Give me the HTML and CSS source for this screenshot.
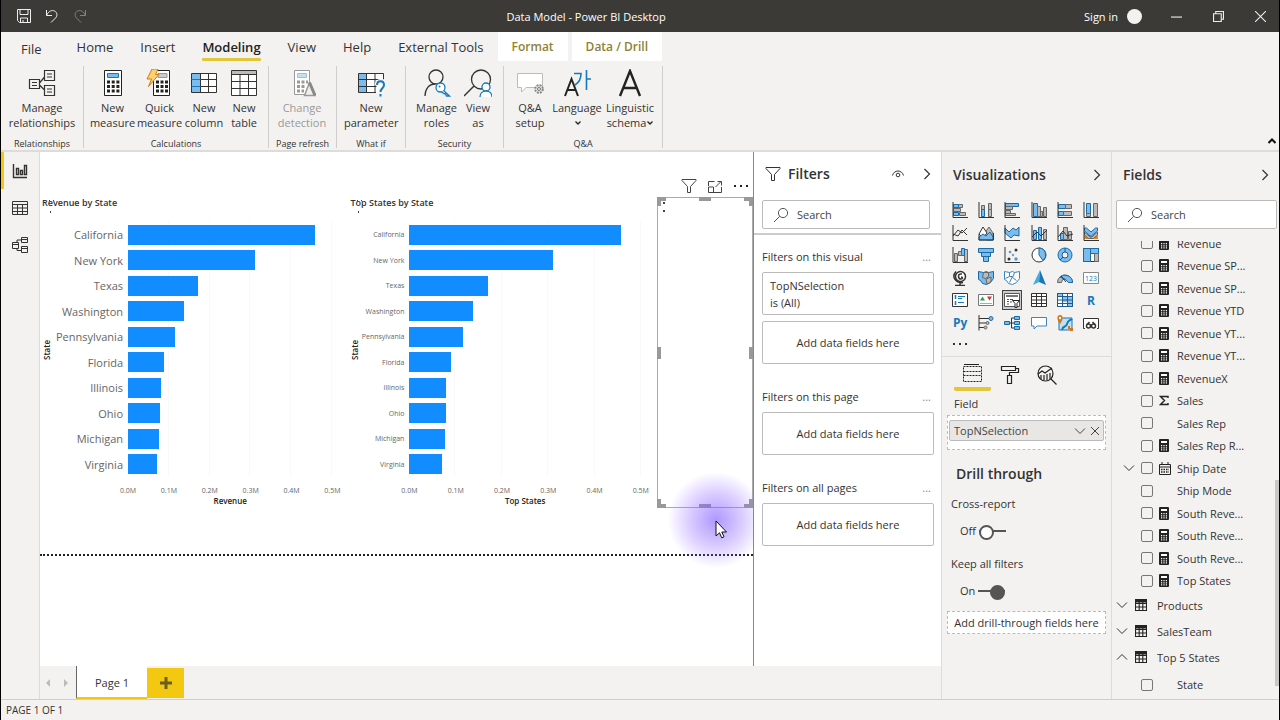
FILE: index.html
```html
<!DOCTYPE html>
<html lang="en">
<head>
    <meta charset="UTF-8">
    <meta name="viewport" content="width=device-width, initial-scale=1.0">
    <title>Data Model - Power BI Desktop</title>
    <link rel="stylesheet" href="styles.css">
</head>
<body>
    <!-- Shared icons -->
    <svg class="defs" aria-hidden="true">
        <symbol id="calc" viewBox="0 0 10 13"><rect width="10" height="13" rx="1" fill="#222"/><path d="M2 2h6v2H2z" fill="#fff"/><path d="M2 6.700h6M2 8.800h6M2 10.900h6" stroke="#fff" stroke-width="1.200" stroke-dasharray="1.200 1.200"/></symbol>
        <symbol id="chev-down" viewBox="0 0 12 12"><path d="M1 3.500l5 5 5-5" fill="none" stroke="currentColor"/></symbol>
        <symbol id="chev-up" viewBox="0 0 12 12"><path d="M1 8.500l5-5 5 5" fill="none" stroke="currentColor"/></symbol>
        <symbol id="chev-right" viewBox="0 0 12 12"><path d="M3.500 1l5 5-5 5" fill="none" stroke="currentColor" stroke-width="1.200"/></symbol>
        <symbol id="search" viewBox="0 0 16 16"><circle cx="10" cy="6" r="4.600" fill="none" stroke="currentColor"/><path d="M6.700 9.300L1 15" stroke="currentColor"/></symbol>
        <symbol id="funnel" viewBox="0 0 16 16"><path d="M1 1.500h14v1L9.500 8.500v6h-3v-6L1 2.500z" fill="none" stroke="currentColor"/></symbol>
        <symbol id="table" viewBox="0 0 12 12"><path d="M.5.5h11v11H.5zM.5 4.500h11M.5 8h11M4.200 3v8.500M7.800 3v8.500" fill="none" stroke="#222" stroke-width="1.100"/><path d="M0 0h12v3.500H0z" fill="#222"/></symbol>
    </svg>

    <header class="titlebar">
        <div class="quick">
            <button aria-label="Save"><svg viewBox="0 0 16 16"><path d="M1.500 1.500h13v13h-11l-2-2zM4 1.500v5h8v-5M4.500 14.500v-4.500h7v4.500M7 12v2.500"/></svg></button>
            <button aria-label="Undo"><svg viewBox="0 0 16 16"><path d="M2.500 2v5.500h5.500M2.500 7.500C4.500 3 8 1.800 10.500 3c3 1.400 3 5 1 7L7 14.500"/></svg></button>
            <button aria-label="Redo" class="dim"><svg viewBox="0 0 16 16"><path d="M13.500 2v5.500h-5.500M13.500 7.500C11.500 3 8 1.800 5.500 3c-3 1.400-3 5-1 7L9 14.500"/></svg></button>
        </div>
        <div class="app-title">Data Model - Power BI Desktop</div>
        <div class="window">
            <a href="#">Sign in</a>
            <span class="avatar"></span>
            <button aria-label="Minimize"><svg viewBox="0 0 10 10"><path d="M0 5.500h10"/></svg></button>
            <button aria-label="Restore"><svg viewBox="0 0 10 10"><path d="M.5 2.500h7v7h-7zM2.500 2.500v-2h7v7h-2"/></svg></button>
            <button aria-label="Close"><svg viewBox="0 0 10 10"><path d="M0 0l10 10M10 0L0 10"/></svg></button>
        </div>
    </header>

    <nav class="tabs">
        <a href="#" class="file">File</a>
        <a href="#">Home</a>
        <a href="#">Insert</a>
        <a href="#" class="active">Modeling</a>
        <a href="#">View</a>
        <a href="#">Help</a>
        <a href="#">External Tools</a>
        <a href="#" class="context">Format</a>
        <a href="#" class="context">Data / Drill</a>
    </nav>

    <section class="ribbon">
        <div class="group">
            <div class="tools">
                <button class="w68"><svg viewBox="0 0 28 28"><path d="M1.500 10.500h10v9h-10zM16.500 1.500h10v10h-10zM16.500 16.500h10v10h-10zM4 13.500h5M4 16.500h5M19 5h5M19 8h5M19 20h5M19 23h5M11.500 14l5-6M11.500 16l5 5" fill="none" stroke="#333" stroke-width="1.200"/></svg>Manage<br>relationships</button>
            </div>
            <h6>Relationships</h6>
        </div>
        <div class="group wide">
            <div class="tools">
                <button class="w47"><svg viewBox="0 0 28 28"><path d="M5.500 1.500h17v25h-17z" fill="#fff" stroke="#222"/><path d="M8.500 4.500h11v4h-11z" fill="#7cbcec" stroke="#1779ba"/><path d="M8 13h12.500M8 17.500h12.500M8 22h12.500" stroke="#222" stroke-width="3" stroke-dasharray="3 1.700"/></svg>New<br>measure</button>
                <button class="w47"><svg viewBox="0 0 28 28"><path d="M7.500 1.500h16v25h-16z" fill="#fff" stroke="#222"/><path d="M12 4.500h9v4h-9z" fill="#ccc" stroke="#999"/><path d="M10 13h12M10 17.500h12M10 22h12" stroke="#222" stroke-width="3" stroke-dasharray="3 1.500"/><path d="M6 0h6L9.500 5.500h3.500L2.500 17.500 5.500 10H1z" fill="#fbd172" stroke="#d47a1c"/></svg>Quick<br>measure</button>
                <button class="w42"><svg viewBox="0 0 28 28"><path d="M1.500 4.500h25v19h-25z" fill="#fff"/><path d="M1.500 4.500h9v19h-9z" fill="#7cbcec"/><path d="M1.500 4.500h25v19h-25zM1.500 10.500h25M1.500 17.500h25M10.500 4.500v19M18.500 4.500v19" fill="none" stroke="#333"/><path d="M1.500 10.500h9M1.500 17.500h9" stroke="#1779ba"/></svg>New<br>column</button>
                <button class="w38"><svg viewBox="0 0 28 28"><path d="M1.500 1.500h25v25h-25z" fill="#fff"/><path d="M1.500 1.500h25v4h-25z" fill="#bbb"/><path d="M1.500 1.500h25v25h-25zM1.500 5.500h25M1.500 12.500h25M1.500 19.500h25M10 5.500v21M18.500 5.500v21" fill="none" stroke="#333"/></svg>New<br>table</button>
            </div>
            <h6>Calculations</h6>
        </div>
        <div class="group">
            <div class="tools">
                <button class="w52" disabled><svg viewBox="0 0 28 28"><path d="M6.500 1.500h15v24h-15z" fill="#fff" stroke="#999"/><path d="M9.500 4.500h9v4h-9z" fill="#c5dff2" stroke="#9bc3de"/><path d="M9 13h11M9 17.500h8M9 22h7" stroke="#999" stroke-width="3" stroke-dasharray="3 1.500"/><path d="M16.500 26.500l5-13 5.500 13z" fill="#eee" stroke="#999" stroke-width="1.500"/><path d="M21.500 13.500l5.500 13" stroke="#888" stroke-width="3"/></svg>Change<br>detection</button>
            </div>
            <h6>Page refresh</h6>
        </div>
        <div class="group">
            <div class="tools">
                <button class="w54"><svg viewBox="0 0 28 28"><path d="M1.500 4.500h25v19h-25z" fill="#fff"/><path d="M1.500 4.500h8v19h-8z" fill="#7cbcec"/><path d="M19 23.500H1.500v-19h25v7M1.500 10.500h22M1.500 17.500h18M9.500 4.500v19M18 4.500v19" fill="none" stroke="#333"/><path d="M20 16c0-5 8-5 8 0 0 3.500-4 3-4 7.500" fill="none" stroke="#f3f2f0" stroke-width="5"/><path d="M20 16c0-5 7-5 7 0 0 3.500-3.500 3-3.500 7M23.500 25v2.500" fill="none" stroke="#1779ba" stroke-width="2"/></svg>New<br>parameter</button>
            </div>
            <h6>What if</h6>
        </div>
        <div class="group">
            <div class="tools">
                <button class="w47"><svg viewBox="0 0 28 28"><circle cx="13" cy="8" r="7" fill="none" stroke="#333" stroke-width="1.300"/><path d="M2 27c0-7 4-12 10-12" fill="none" stroke="#333" stroke-width="1.300"/><circle cx="17.500" cy="18.500" r="4.500" fill="#fff" stroke="#1779ba" stroke-width="1.300"/><path d="M20.500 21.500l6 5.500h-3l-1-2-2-.5-2-2" fill="#fff" stroke="#1779ba" stroke-width="1.300"/><circle cx="16.500" cy="17.500" r="1" fill="#1779ba"/></svg>Manage<br>roles</button>
                <button class="w36"><svg viewBox="0 0 28 28"><circle cx="17" cy="10.500" r="9.500" fill="none" stroke="#333" stroke-width="1.300"/><path d="M10 17L0 27" stroke="#333" stroke-width="1.500"/><circle cx="22" cy="18" r="4" fill="#fff" stroke="#1779ba" stroke-width="1.300"/><path d="M16 28c0-8 12-8 12 0" fill="#fff" stroke="#1779ba" stroke-width="1.300"/></svg>View<br>as</button>
            </div>
            <h6>Security</h6>
        </div>
        <div class="group wide">
            <div class="tools">
                <button class="w42"><svg viewBox="0 0 28 28"><path d="M1.500 4.500h25v14H10l-4.500 4.500v-4.500h-4z" fill="#fff" stroke="#bbb"/><circle cx="23" cy="20" r="3.800" fill="#eee" stroke="#888" stroke-width="2" stroke-dasharray="2 1"/><circle cx="23" cy="20" r="1.500" fill="none" stroke="#777"/></svg>Q&amp;A<br>setup</button>
                <button class="w52"><svg viewBox="0 0 28 28"><path d="M2 27L8.500 10l6.500 17M4.500 21h8" fill="none" stroke="#222" stroke-width="2"/><path d="M11 4.500h7c0 6-2 9-6 11.500M23.500 1v20M23.500 10h4.500" fill="none" stroke="#1779ba" stroke-width="1.600"/></svg>Language<br><svg class="caret" viewBox="0 0 6 6"><path d="M.5 1.500L3 4l2.500-2.500" fill="none" stroke="#222" stroke-width="1.300"/></svg></button>
                <button class="w54"><svg viewBox="0 0 28 28"><path d="M4 27L14 2l10 25M7.500 19h13" fill="none" stroke="#222" stroke-width="2.400"/></svg>Linguistic<br>schema<svg class="caret" viewBox="0 0 6 6"><path d="M.5 1.500L3 4l2.500-2.500" fill="none" stroke="#222" stroke-width="1.300"/></svg></button>
            </div>
            <h6>Q&amp;A</h6>
        </div>
        <button class="collapse" aria-label="Collapse ribbon"><svg viewBox="0 0 8 8"><path d="M.5 6L4 2.500 7.500 6" fill="none" stroke="#111" stroke-width="2"/></svg></button>
    </section>

    <main class="workspace">
        <nav class="rail">
            <button class="active" aria-label="Report"><svg viewBox="0 0 16 16"><path d="M1.500 1v13.500H15M4.500 5.500h2v6h-2zM8.500 7.500h2v4h-2zM12.500 2.500h2v9h-2z" stroke-width="1.400"/></svg></button>
            <button aria-label="Data"><svg viewBox="0 0 16 16"><path d="M.5 1.500h15v13H.5zM.5 4.500h15M.5 8h15M.5 11.500h15M5.500 4.500v10M10.500 4.500v10"/></svg></button>
            <button aria-label="Model"><svg viewBox="0 0 16 16"><path d="M.5 5.500h6v6h-6zM.5 7.500h6M9.500 .5h6v5h-6zM9.500 2.500h6M9.500 9.500h6v6h-6zM9.500 11.500h6M5 5.500V3h4.500M5 11.500V13.500h4.500"/></svg></button>
        </nav>

        <section class="canvas">
            <div class="page">
                <article class="chart">
                    <h2>Revenue by State</h2>
                    <i class="drag"></i>
                    <div class="y-title">State</div>
                    <ul class="labels">
                        <li>California</li><li>New York</li><li>Texas</li><li>Washington</li><li>Pennsylvania</li>
                        <li>Florida</li><li>Illinois</li><li>Ohio</li><li>Michigan</li><li>Virginia</li>
                    </ul>
                    <div class="plot">
                        <div style="width: 91.5%"></div>
                        <div style="width: 62%"></div>
                        <div style="width: 34%"></div>
                        <div style="width: 27.5%"></div>
                        <div style="width: 23.2%"></div>
                        <div style="width: 17.8%"></div>
                        <div style="width: 16%"></div>
                        <div style="width: 15.6%"></div>
                        <div style="width: 15.2%"></div>
                        <div style="width: 14%"></div>
                    </div>
                    <div class="ticks"><span>0.0M</span><span>0.1M</span><span>0.2M</span><span>0.3M</span><span>0.4M</span><span>0.5M</span></div>
                    <div class="x-title">Revenue</div>
                </article>

                <article class="chart small">
                    <h2>Top States by State</h2>
                    <i class="drag"></i>
                    <div class="y-title">State</div>
                    <ul class="labels">
                        <li>California</li><li>New York</li><li>Texas</li><li>Washington</li><li>Pennsylvania</li>
                        <li>Florida</li><li>Illinois</li><li>Ohio</li><li>Michigan</li><li>Virginia</li>
                    </ul>
                    <div class="plot">
                        <div style="width: 91.5%"></div>
                        <div style="width: 62%"></div>
                        <div style="width: 34%"></div>
                        <div style="width: 27.5%"></div>
                        <div style="width: 23.2%"></div>
                        <div style="width: 17.8%"></div>
                        <div style="width: 16%"></div>
                        <div style="width: 15.6%"></div>
                        <div style="width: 15.2%"></div>
                        <div style="width: 14%"></div>
                    </div>
                    <div class="ticks"><span>0.0M</span><span>0.1M</span><span>0.2M</span><span>0.3M</span><span>0.4M</span><span>0.5M</span></div>
                    <div class="x-title">Top States</div>
                </article>

                <article class="selected">
                    <div class="visual-tools">
                        <button aria-label="Filters"><svg><use href="#funnel"/></svg></button>
                        <button aria-label="Focus mode"><svg viewBox="0 0 16 16"><path d="M1.500 8V3.500h6M14.500 9v5.500h-13V9h5v5.500M8.500 9L14 3.500M10.500 3.500h4v4" fill="none" stroke="currentColor"/></svg></button>
                        <button aria-label="More options"><svg viewBox="0 0 16 16"><path d="M1 8h2M7 8h2M13 8h2" stroke="#222" stroke-width="2"/></svg></button>
                    </div>
                    <span class="handle tl"></span><span class="handle t"></span><span class="handle tr"></span>
                    <span class="handle l"></span><span class="handle r"></span>
                    <span class="handle bl"></span><span class="handle b"></span><span class="handle br"></span>
                    <i class="dots"></i>
                    <div class="halo"></div>
                    <svg class="cursor" viewBox="0 0 12 19"><path d="M1 1v15l3.500-3.200 2.200 5 2.300-1-2.200-4.800H11.500z" fill="#fff" stroke="#111"/></svg>
                </article>
            </div>
        </section>

        <aside class="filters">
            <header>
                <svg><use href="#funnel"/></svg>
                <h2>Filters</h2>
                <button aria-label="Hide pane"><svg viewBox="0 0 12 12"><path d="M.5 7.500C2 1.500 10 1.500 11.500 7.500" fill="none" stroke="currentColor"/><circle cx="6" cy="7" r="1.800" fill="none" stroke="currentColor"/></svg></button>
                <button aria-label="Collapse filters"><svg><use href="#chev-right"/></svg></button>
            </header>
            <label class="search"><svg><use href="#search"/></svg><input type="text" placeholder="Search" aria-label="Search filters"></label>
            <section>
                <h3>Filters on this visual <button aria-label="More options">...</button></h3>
                <div class="card">TopNSelection<br>is (All)</div>
                <div class="card drop">Add data fields here</div>
            </section>
            <section>
                <h3>Filters on this page <button aria-label="More options">...</button></h3>
                <div class="card drop">Add data fields here</div>
            </section>
            <section>
                <h3>Filters on all pages <button aria-label="More options">...</button></h3>
                <div class="card drop">Add data fields here</div>
            </section>
        </aside>

        <aside class="visuals">
            <header>
                <h2>Visualizations</h2>
                <button aria-label="Collapse visualizations"><svg><use href="#chev-right"/></svg></button>
            </header>
            <div class="gallery">
                <button aria-label="Stacked bar chart"><svg viewBox="0 0 16 16"><path class="g" d="M6.500 2.500h4v3h-4zM7.500 10.500h6v3h-6z"/><path class="b" d="M1.500 2.500h5v3h-5zM1.500 10.500h5v3h-5z"/><path class="g" d="M1.500 6.500h7v3h-7z"/><path class="k" d="M1 0v15.500h15"/></svg></button>
                <button aria-label="Stacked column chart"><svg viewBox="0 0 16 16"><path class="g" d="M3.500 3.500h3v4h-3zM10.500 1.500h3v6h-3z"/><path class="b" d="M3.500 7.500h3v7h-3z"/><path class="g" d="M10.500 7.500h3v7h-3z"/><path class="k" d="M1 0v15.500h15"/></svg></button>
                <button aria-label="Clustered bar chart"><svg viewBox="0 0 16 16"><path class="b" d="M1.500 1.500h13v3h-13z"/><path class="g" d="M1.500 4.500h7v3h-7zM1.500 8.500h5v3h-5zM1.500 11.500h10v2h-10z"/><path class="k" d="M1 0v15.500h15"/></svg></button>
                <button aria-label="Clustered column chart"><svg viewBox="0 0 16 16"><path class="b" d="M2.500 1.500h4v13h-4z"/><path class="g" d="M6.500 4.500h3v10h-3zM9.500 9.500h2v5h-2zM12.500 5.500h3v9h-3z"/><path class="k" d="M1 0v15.500h15"/></svg></button>
                <button aria-label="100% stacked bar chart"><svg viewBox="0 0 16 16"><path class="b" d="M1.500 2.500h7v4h-7zM1.500 9.500h5v4h-5z"/><path class="g" d="M8.500 2.500h6v4h-6zM6.500 9.500h8v4h-8z"/><path class="k" d="M1 0v15.500h15"/></svg></button>
                <button aria-label="100% stacked column chart"><svg viewBox="0 0 16 16"><path class="b" d="M3.500 1.500h4v10h-4z"/><path class="g" d="M3.500 11.500h4v3h-4zM10.500 1.500h4v13h-4z"/><path class="k" d="M1 0v15.500h15"/></svg></button>

                <button aria-label="Line chart"><svg viewBox="0 0 16 16"><path class="k" d="M1 0v15.500h15M1 11l5-6 4 3 5-5M1 9l5 2 4-6 5 5"/></svg></button>
                <button aria-label="Area chart"><svg viewBox="0 0 16 16"><path class="g" d="M6 9l5-7 4 6v7H9z"/><path class="w" d="M1 9l4-7 4 6-4 5z"/><path class="b" d="M1 15v-3l4-3 3 2 4-4 3 5v3z"/><path class="k" d="M1 9v6h14.500V8"/></svg></button>
                <button aria-label="Stacked area chart"><svg viewBox="0 0 16 16"><path class="b" d="M1 3l4 4 4-4 3 2 3-3v9l-5-1-3 3-6-5z"/><path class="k" d="M1 0v15.500h15"/></svg></button>
                <button aria-label="Line and stacked column chart"><svg viewBox="0 0 16 16"><path class="b" d="M2.500 5.500h3v9h-3zM7.500 2.500h3v12h-3z"/><path class="g" d="M12.500 4.500h3v10h-3z"/><path class="k" d="M1 0v15.500h15M1 12l5-5 4 4 6-6"/></svg></button>
                <button aria-label="Line and clustered column chart"><svg viewBox="0 0 16 16"><path class="b" d="M3.500 8.500h3v6h-3z"/><path class="g" d="M6.500 2.500h4v12h-4zM11.500 6.500h3v8h-3z"/><path class="k" d="M1 0v15.500h15M1 12l5-6 4 5 6-2"/></svg></button>
                <button aria-label="Ribbon chart"><svg viewBox="0 0 16 16"><path fill="#d8892b" d="M1 11l4-2 5 3 5-2v4H1z"/><path class="b" d="M1.500 3h2l4.500 4 4.500-4h2v3l-6 5H7L1.500 6z"/><path class="g" d="M1.500 7l5.500 5h2l5.500-5v3l-4 3.500h-5L1.500 10z"/><path class="k" d="M1 0v15.500h15"/></svg></button>

                <button aria-label="Waterfall chart"><svg viewBox="0 0 16 16"><path class="g" d="M2.500 6.500h3v8h-3zM12.500 2.500h3v12h-3z"/><path class="b" d="M9.500 1.500h3v7h-3z"/><path class="g" d="M6.500 4.500h3v4h-3z"/><path class="k" d="M1 0v15.500h15"/></svg></button>
                <button aria-label="Funnel chart"><svg viewBox="0 0 16 16"><path class="b" d="M.5 1.500h15v4H.5zM3.500 5.500h9v4h-9zM5.500 9.500h5v5h-5z"/></svg></button>
                <button aria-label="Scatter chart"><svg viewBox="0 0 16 16"><path class="k" d="M1 0v15.500h15"/><circle cx="5" cy="12" r="1.500" fill="#333"/><circle cx="12" cy="3" r="1.500" fill="#333"/><circle cx="6" cy="5" r="1.300" fill="#4e9bd3"/><circle cx="12" cy="12" r="1.700" fill="#4e9bd3"/><circle cx="9" cy="8" r="1.200" fill="#999"/></svg></button>
                <button aria-label="Pie chart"><svg viewBox="0 0 16 16"><circle class="w" cx="8" cy="8" r="7"/><path class="b" d="M8 1a7 7 0 0 1 4 12.500L8 8z"/></svg></button>
                <button aria-label="Donut chart"><svg viewBox="0 0 16 16"><circle class="b" cx="8" cy="8" r="7"/><circle cx="8" cy="8" r="3" fill="#f3f2f0" stroke="#1a5c92"/><path d="M8 1v4M3 13l3-3" stroke="#1a5c92"/></svg></button>
                <button aria-label="Treemap"><svg viewBox="0 0 16 16"><path class="w" d="M.5 1.500h15v13H.5z"/><path class="b" d="M.5 1.500h7v13h-7z"/><path class="b" d="M7.500 1.500h8v5h-8z"/><path class="g" d="M11.500 6.500h4v8h-4z"/></svg></button>

                <button aria-label="Map"><svg viewBox="0 0 16 16"><circle class="w thick" cx="8.500" cy="6.500" r="5"/><path class="k thick" d="M4 1.500C-1 7 4 13.500 11 12.500M8 13v2.500M3 15.500h10M10 4c-5-1-4 5-1 5 2 0 2-2 0-2"/></svg></button>
                <button aria-label="Filled map"><svg viewBox="0 0 16 16"><path class="b" d="M.5 1.500l5 1 3-1 2 1 5-1v7l-3 4-4 2-4-1-2-3-2-1z"/><path class="g" d="M5.500 2.500h5v4l-3 2-3-1zM8 9l5-2v5l-4 2z"/></svg></button>
                <button aria-label="Shape map"><svg viewBox="0 0 16 16"><path class="w blue" d="M.5 1.500l5 1 3-1 2 1 5-1v7l-3 4-4 2-4-1-2-3-2-1zM5.500 2.500v4l-4 2M10.500 2.500l-2 5 4 3M5.500 6.500h3l-3 6"/></svg></button>
                <button aria-label="Azure map"><svg viewBox="0 0 16 16"><path d="M9 0L2 15l6-3z" fill="#49a9dd"/><path d="M9 0l6 15-7-3z" fill="#1779ba"/></svg></button>
                <button aria-label="Gauge"><svg viewBox="0 0 16 16"><path class="g" d="M.5 12.500a7.500 7.500 0 0 1 15 0h-4a3.500 3.500 0 0 0-7 0z"/><path class="b" d="M3 7a7.500 7.500 0 0 1 12.500 5.500h-4L8 9z"/><path class="k" d="M4 6l5 6"/></svg></button>
                <button aria-label="Card"><svg viewBox="0 0 16 16"><path d="M.5 2.500h15v11H.5z" fill="#fff" stroke="#888"/><text x="2" y="11" font-size="7" fill="#1779ba">123</text></svg></button>

                <button aria-label="Multi-row card"><svg viewBox="0 0 16 16"><path class="w" d="M.5 1.500h15v13H.5z"/><path d="M3.500 3v4M3.500 9v4" stroke="#1779ba" stroke-width="1.500"/><path d="M6 4.500h7M6 6.500h4M6 10.500h6" stroke="#1779ba"/></svg></button>
                <button aria-label="KPI"><svg viewBox="0 0 16 16"><path d="M.5 2.500h15v11H.5z" fill="#fff" stroke="#777"/><path d="M2 8.500l2.500-4 2.500 4z" fill="#2f9e54"/><path d="M9 4.500h5l-2.500 4z" fill="#d13438"/><path d="M2 11.500h12" stroke="#aaa"/></svg></button>
                <button aria-label="Slicer" class="picked"><svg viewBox="0 0 16 16"><path d="M.5 1.500h15v13H.5z" fill="#fff" stroke="#555"/><path d="M2 4h12" stroke="#777" stroke-width="2"/><path d="M3 7.500h2M3 9.500h2M3 12h2M6 7.500h3M6 10h2" stroke="#555"/><path d="M8.500 8.500h7l-2.500 3v4h-2v-4z" fill="#fff" stroke="#222"/></svg></button>
                <button aria-label="Table"><svg viewBox="0 0 16 16"><path class="w" d="M.5 1.500h15v13H.5zM.5 4.500h15M.5 8h15M.5 11.500h15M5.500 1.500v13M10.500 1.500v13"/></svg></button>
                <button aria-label="Matrix"><svg viewBox="0 0 16 16"><path class="w" d="M.5 1.500h15v13H.5z"/><path fill="#8cc4ef" d="M6 5h9v9H10v-4H6zM1 2h4v2H1z"/><path fill="none" stroke="#1a5c92" d="M.5 1.500h15v13H.5zM.5 4.500h15M.5 8h15M.5 11.500h15M5.500 1.500v13M10.500 1.500v13"/></svg></button>
                <button aria-label="R script visual" class="letters">R</button>

                <button aria-label="Python visual" class="letters">Py</button>
                <button aria-label="Key influencers"><svg viewBox="0 0 16 16"><path class="k" d="M1 0v15.500M1 3.500h10M1 8h7M1 12.500h5"/><circle class="b" cx="13" cy="3.500" r="2"/><circle class="g" cx="9.500" cy="8" r="1.500"/><circle class="g" cx="7.500" cy="12.500" r="1.500"/></svg></button>
                <button aria-label="Decomposition tree"><svg viewBox="0 0 16 16"><path class="k" d="M5 8h5M7.500 3v10M7.500 3H10M7.500 13H10"/><path class="b" d="M.5 6.500h5v3h-5zM10.500 1.500h5v3h-5zM10.500 6.500h5v3h-5zM10.500 11.500h5v3h-5z"/></svg></button>
                <button aria-label="Q&amp;A"><svg viewBox="0 0 16 16"><path d="M.5 2.500h15v8.500H6l-3 3v-3H.5z" fill="#fff" stroke="#3c87be"/></svg></button>
                <button aria-label="ArcGIS map"><svg viewBox="0 0 16 16"><path d="M2 3h13v12H2z" fill="#bfe0f5" stroke="#1779ba"/><path d="M5 15c1-5 4-2 5-6s2-3 5-5" fill="none" stroke="#1779ba" stroke-width="2"/><path d="M3 9C-1 4 0 0 3 0s4 4 0 9z" fill="#d4751b"/><circle cx="3" cy="3" r="1.200" fill="#fff"/><path d="M11 11h2v2h3v3h-3v-2h-2z" fill="#d4751b"/></svg></button>
                <button aria-label="Paginated report"><svg viewBox="0 0 16 16"><path class="w" d="M2 13.500H.5v-10h15v10H14"/><circle class="k thick" cx="5.500" cy="11" r="2"/><circle class="k thick" cx="10.500" cy="11" r="2"/><path class="k thick" d="M4 9.500L6.500 7M12 9.500L9.500 7"/></svg></button>
                <button aria-label="Get more visuals"><svg viewBox="0 0 16 16"><path d="M1 7h2M7 7h2M13 7h2" stroke="#333" stroke-width="2"/></svg></button>
            </div>

            <div class="modes">
                <button class="active" aria-label="Fields"><svg viewBox="0 0 20 20"><path d="M1 1.500h15" stroke="#222"/><path d="M.5 3.500h18v15H.5zM.5 8.500h18M.5 12.500h18" fill="none" stroke="#222" stroke-dasharray="2 1"/></svg></button>
                <button aria-label="Format"><svg viewBox="0 0 20 20"><path d="M1.500 1.500h14v4h-14zM15.500 3.500h3v4h-9v3M7.500 10.500h4v8h-4z" fill="none" stroke="#222" stroke-width="1.200"/></svg></button>
                <button aria-label="Analytics"><svg viewBox="0 0 20 20"><circle cx="8.500" cy="8.500" r="7.500" fill="none" stroke="#222" stroke-width="1.200"/><path d="M14 14l5.500 5.500M1 9l4-3 3 2 7-5M4 14v-4M7 15v-5M10 15v-6M13 14V8" fill="none" stroke="#222" stroke-width="1.200"/></svg></button>
            </div>

            <div class="wells">
                <h4>Field</h4>
                <div class="well">
                    <div class="pill"><span>TopNSelection</span><button aria-label="Field menu"><svg><use href="#chev-down"/></svg></button><button aria-label="Remove field"><svg viewBox="0 0 12 12"><path d="M2 2l8 8M10 2l-8 8" stroke="currentColor"/></svg></button></div>
                </div>
                <h3>Drill through</h3>
                <h4>Cross-report</h4>
                <label class="toggle">Off <input type="checkbox"></label>
                <h4>Keep all filters</h4>
                <label class="toggle">On <input type="checkbox" checked></label>
                <div class="well hint">Add drill-through fields here</div>
            </div>
        </aside>

        <aside class="fields">
            <header>
                <h2>Fields</h2>
                <button aria-label="Collapse fields"><svg><use href="#chev-right"/></svg></button>
            </header>
            <label class="search"><svg><use href="#search"/></svg><input type="text" placeholder="Search" aria-label="Search fields"></label>
            <div class="tree">
                <div class="items">
                    <label><i></i><input type="checkbox"><svg><use href="#calc"/></svg>Revenue</label>
                    <label><i></i><input type="checkbox"><svg><use href="#calc"/></svg>Revenue SP...</label>
                    <label><i></i><input type="checkbox"><svg><use href="#calc"/></svg>Revenue SP...</label>
                    <label><i></i><input type="checkbox"><svg><use href="#calc"/></svg>Revenue YTD</label>
                    <label><i></i><input type="checkbox"><svg><use href="#calc"/></svg>Revenue YT...</label>
                    <label><i></i><input type="checkbox"><svg><use href="#calc"/></svg>Revenue YT...</label>
                    <label><i></i><input type="checkbox"><svg><use href="#calc"/></svg>RevenueX</label>
                    <label><i></i><input type="checkbox"><svg viewBox="0 0 10 13"><path d="M9 4V2.500H1.500L5.500 6.500l-4 4H9V9" fill="none" stroke="#222" stroke-width="1.400"/></svg>Sales</label>
                    <label><i></i><input type="checkbox"><b></b>Sales Rep</label>
                    <label><i></i><input type="checkbox"><svg><use href="#calc"/></svg>Sales Rep R...</label>
                    <label><svg class="chev"><use href="#chev-down"/></svg><input type="checkbox"><svg class="date" viewBox="0 0 12 13"><path d="M.5 2.500h11v10H.5zM.5 5h11M3 0v3M9 0v3" fill="none" stroke="#222"/><path d="M2 7.500h8M2 10h8" stroke="#222" stroke-width="1.500" stroke-dasharray="1.500 1"/></svg>Ship Date</label>
                    <label><i></i><input type="checkbox"><b></b>Ship Mode</label>
                    <label><i></i><input type="checkbox"><svg><use href="#calc"/></svg>South Reve...</label>
                    <label><i></i><input type="checkbox"><svg><use href="#calc"/></svg>South Reve...</label>
                    <label><i></i><input type="checkbox"><svg><use href="#calc"/></svg>South Reve...</label>
                    <label><i></i><input type="checkbox"><svg><use href="#calc"/></svg>Top States</label>
                </div>
                <button class="table-row"><svg><use href="#chev-down"/></svg><svg><use href="#table"/></svg>Products</button>
                <button class="table-row"><svg><use href="#chev-down"/></svg><svg><use href="#table"/></svg>SalesTeam</button>
                <button class="table-row"><svg><use href="#chev-up"/></svg><svg><use href="#table"/></svg>Top 5 States</button>
                <div class="items single">
                    <label><i></i><input type="checkbox"><b></b>State</label>
                </div>
                <span class="thumb"></span>
            </div>
        </aside>

        <nav class="sheets">
            <button class="arrow" aria-label="Previous page"><svg viewBox="0 0 6 8"><path d="M5 0v8L1 4z"/></svg></button>
            <button class="arrow" aria-label="Next page"><svg viewBox="0 0 6 8"><path d="M1 0v8l4-4z"/></svg></button>
            <button class="sheet">Page 1</button>
            <button class="add" aria-label="New page"><svg viewBox="0 0 12 12"><path d="M6 0v12M0 6h12" stroke="#6b5f1e" stroke-width="3"/></svg></button>
        </nav>
    </main>

    <footer>PAGE 1 OF 1</footer>
</body>
</html>
```
FILE: styles.css
```css
* {
    box-sizing: border-box;
}
body {
    margin: 0;
    height: 100vh;
    display: flex;
    flex-direction: column;
    overflow: hidden;
    background: #f3f2f0;
    border-left: 1px solid #000;
    border-right: 1px solid #000;
    color: #333;
    font-family: "Open Sans", "Noto Sans", sans-serif;
    font-size: 11px;
    line-height: 15px;
}
h2, h3, h4, h6, ul {
    margin: 0;
    padding: 0;
    font-size: 11px;
    font-weight: normal;
}
ul {
    list-style: none;
}
a {
    color: inherit;
    text-decoration: none;
}
button {
    margin: 0;
    padding: 0;
    border: none;
    background: none;
    color: inherit;
    font: inherit;
}
svg {
    display: block;
    flex: none;
}
.defs {
    position: absolute;
    width: 0;
    height: 0;
}

/* Title bar */
.titlebar {
    display: flex;
    align-items: center;
    height: 32px;
    flex: none;
    background: #3b3a36;
    color: #fff;
}
.titlebar svg {
    fill: none;
    stroke: #eee;
}
.quick {
    display: flex;
    gap: 12px;
    padding-left: 15px;
}
.quick svg {
    width: 16px;
    height: 16px;
}
.quick .dim {
    opacity: 0.4;
}
.app-title {
    flex: 1;
    text-align: center;
}
.window {
    display: flex;
    align-items: center;
    padding-right: 13px;
}
.avatar {
    width: 15px;
    height: 15px;
    margin: 0 29px 0 9px;
    border-radius: 50%;
    background: #f3f2f0;
}
.window button {
    margin-left: 31px;
}
.window .avatar + button {
    margin-left: 0;
}
.window svg {
    width: 11px;
    height: 11px;
}

/* Ribbon tabs */
.tabs {
    display: flex;
    flex: none;
    height: 30px;
    padding-left: 6px;
    font-size: 13px;
    line-height: 30px;
}
.tabs a {
    height: 29px;
    padding: 0 14px 0 13px;
}
.tabs .file {
    margin-right: 8px;
    padding: 2px 14px 0;
}
.tabs .active {
    position: relative;
    font-weight: 600;
    color: #222;
}
.tabs .active::after {
    content: '';
    position: absolute;
    left: 13px;
    right: 14px;
    bottom: 0;
    height: 3px;
    border-radius: 1px;
    background: #e3c63a;
}
.tabs .context {
    margin-right: 4px;
    padding: 0 14px;
    background: #fff;
    color: #8f8136;
    font-size: 12px;
    font-weight: 600;
}

/* Ribbon */
.ribbon {
    display: flex;
    flex: none;
    height: 90px;
    padding: 4px 0 2px;
    border-bottom: 2px solid #dddcda;
}
.group {
    display: flex;
    flex-direction: column;
    justify-content: space-between;
    padding: 0 7px;
    border-right: 1px solid #cfcecc;
}
.group.wide {
    padding: 0 5px;
}
.tools {
    display: flex;
}
.tools button {
    padding-top: 3px;
    white-space: nowrap;
    text-align: center;
}
.tools button:disabled {
    color: #999;
}
.tools svg {
    width: 28px;
    height: 28px;
    margin: 0 auto 3px;
}
.tools .caret {
    display: inline-block;
    width: 6px;
    height: 6px;
    margin: 0 0 1px 1px;
}
.w36 { width: 36px; }
.w38 { width: 38px; }
.w42 { width: 42px; }
.w47 { width: 47px; }
.w52 { width: 52px; }
.w54 { width: 54px; }
.w68 { width: 68px; }
.group h6 {
    font-size: 9px;
    line-height: 8px;
    text-align: center;
    white-space: nowrap;
}
.collapse {
    align-self: flex-end;
    margin-left: auto;
    padding: 0 3px 3px 0;
}
.collapse svg {
    width: 8px;
    height: 8px;
}

/* Workspace */
.workspace {
    flex: 1;
    min-height: 0;
    display: grid;
    grid-template-columns: 39px 1fr 189px 170px 167px;
    grid-template-rows: 1fr 33px;
    border-bottom: 1px solid #cfcecc;
}
.rail {
    grid-row: 1 / 3;
    border-right: 1px solid #dddcda;
}
.rail button {
    display: flex;
    align-items: center;
    width: 100%;
    height: 37px;
    padding-left: 11px;
}
.rail .active {
    padding-left: 8px;
    border-left: 3px solid #f2c811;
}
.rail svg {
    width: 16px;
    height: 16px;
    fill: none;
    stroke: #333;
}

/* Report page */
.canvas {
    overflow: hidden;
    background: #fff;
}
.page {
    display: grid;
    grid-template-columns: 308fr 308fr 96fr;
    height: 404px;
    padding-top: 45px;
    border-bottom: 2px dotted #222;
}
.chart {
    position: relative;
    display: grid;
    grid-template-columns: 14px 69px 1fr;
    grid-template-rows: 25px 255px 9px 10px 10px;
    padding-right: 16px;
}
.chart.small {
    grid-template-columns: 14px 42px 1fr;
}
.chart h2 {
    grid-column: 1 / 4;
    padding-left: 2px;
    font-size: 9px;
    line-height: 12px;
    font-weight: 600;
    color: #333;
}
.drag {
    position: absolute;
    left: 10px;
    top: 14px;
    width: 1px;
    height: 1px;
    background: #444;
    box-shadow: 0 1px #444, -1px -11px #444, 3px -11px #444;
}
.y-title {
    grid-area: 2 / 1;
    justify-self: center;
    align-self: center;
    writing-mode: vertical-rl;
    transform: rotate(180deg);
    font-size: 8px;
    line-height: 10px;
    font-weight: 600;
    color: #222;
}
.labels, .plot {
    display: grid;
    grid-template-rows: repeat(10, 1fr);
    align-items: center;
}
.labels {
    grid-area: 2 / 2;
    justify-content: end;
    text-align: right;
    color: #666;
    white-space: nowrap;
}
.small .labels {
    font-size: 7px;
}
.plot {
    grid-area: 2 / 3;
    margin-left: 5px;
    background: repeating-linear-gradient(to right, #fff 0, #fff calc(20% - 1px), #f9f9f9 calc(20% - 1px), #f9f9f9 20%);
}
.plot div {
    height: 20px;
    background: #118dff;
}
.ticks {
    grid-area: 4 / 3;
    display: flex;
    justify-content: space-between;
    margin: 0 -12px 0 -7px;
    font-size: 7px;
    line-height: 10px;
    color: #666;
}
.ticks span {
    width: 24px;
    text-align: center;
}
.x-title {
    grid-area: 5 / 3;
    padding-left: 5px;
    text-align: center;
    font-size: 8px;
    line-height: 10px;
    font-weight: 600;
    color: #222;
}
.selected {
    position: relative;
    height: 311px;
    border: 1px solid #aaa;
    color: #444;
}
.visual-tools {
    position: absolute;
    right: 3px;
    top: -20px;
    display: flex;
    gap: 10px;
}
.visual-tools svg {
    width: 16px;
    height: 16px;
}
.handle {
    position: absolute;
    border: 0 solid #999;
}
.tl, .tr, .bl, .br { width: 9px; height: 9px; }
.tl { left: -1px; top: -1px; border-width: 4px 0 0 4px; }
.tr { right: -1px; top: -1px; border-width: 4px 4px 0 0; }
.bl { left: -1px; bottom: -1px; border-width: 0 0 4px 4px; }
.br { right: -1px; bottom: -1px; border-width: 0 4px 4px 0; }
.t, .b { left: calc(50% - 6px); width: 12px; border-top-width: 4px; }
.t { top: -1px; }
.b { bottom: -1px; }
.l, .r { top: calc(50% - 6px); height: 12px; border-left-width: 4px; }
.l { left: -1px; }
.r { right: -1px; }
.dots {
    position: absolute;
    left: 5px;
    top: 4px;
    width: 2px;
    height: 10px;
    border: solid #444;
    border-width: 2px 0;
}
.halo {
    position: absolute;
    left: 10px;
    bottom: -61px;
    width: 96px;
    height: 96px;
    border-radius: 50%;
    background: radial-gradient(closest-side, rgba(122, 82, 255, 0.6), rgba(150, 110, 255, 0.35) 55%, rgba(170, 130, 255, 0));
}
.cursor {
    position: absolute;
    left: 57px;
    bottom: -32px;
    width: 12px;
    height: 19px;
}

/* Side panes */
aside > header {
    display: flex;
    align-items: center;
    height: 46px;
}
aside > header h2 {
    flex: 1;
    font-size: 14px;
    font-weight: 600;
    line-height: 20px;
}
aside > header button svg {
    width: 12px;
    height: 12px;
}
.search {
    display: flex;
    align-items: center;
    gap: 8px;
    height: 29px;
    padding-left: 10px;
    border: 1px solid #bbb;
    border-radius: 2px;
    background: #fff;
    color: #555;
}
.search svg {
    width: 16px;
    height: 16px;
}
.search input {
    min-width: 0;
    flex: 1;
    padding: 0;
    border: none;
    outline: none;
    background: none;
    font: inherit;
}
.search input::placeholder {
    color: #444;
    opacity: 1;
}
.filters {
    background: #fff;
    border-left: 1px solid #888;
    border-right: 1px solid #dddcda;
}
.filters > header {
    gap: 7px;
    padding: 0 8px 2px 11px;
}
.filters > header > svg {
    width: 16px;
    height: 16px;
}
.filters > header button {
    margin-left: 10px;
}
.filters .search {
    margin: 2px 11px 4px 8px;
}
.filters section {
    padding: 14px 7px 5px 8px;
}
.filters section:first-of-type {
    border-top: 2px solid #ccc;
}
.filters h3 {
    display: flex;
    justify-content: space-between;
    padding: 0 3px 8px 0;
}
.filters h3 button {
    color: #888;
}
.filters .card {
    height: 43px;
    margin-bottom: 6px;
    padding: 4px 7px;
    border: 1px solid #bbb;
    border-radius: 2px;
    line-height: 17px;
}
.filters .drop {
    line-height: 33px;
    text-align: center;
}

/* Visualizations */
.visuals {
    grid-row: 1 / 3;
    grid-column: 4;
    border-right: 1px solid #dddcda;
}
.visuals > header, .fields > header {
    padding: 0 8px 0 11px;
}
.gallery {
    display: grid;
    grid-template-columns: repeat(6, 1fr);
    grid-template-rows: repeat(6, 1fr) 22px;
    height: 159px;
    padding: 1px 7px 0 5px;
    place-items: center;
    border-bottom: 1px solid #dddcda;
}
.gallery svg {
    width: 16px;
    height: 16px;
}
.gallery .picked {
    padding: 1px;
    outline: 1px solid #444;
    background: #ccc;
}
.gallery .letters {
    color: #1779ba;
    font-size: 12px;
    font-weight: bold;
}
.gallery .b { fill: #7cbcec; stroke: #1a6aa5; }
.gallery .g { fill: #bbb; stroke: #666; }
.gallery .w { fill: #fff; stroke: #333; }
.gallery .k { fill: none; stroke: #333; }
.gallery .blue { stroke: #3c87be; }
.gallery .thick { stroke-width: 1.5; }
.modes {
    display: flex;
    padding: 6px 0 0 12px;
}
.modes button {
    width: 37px;
    height: 28px;
}
.modes svg {
    width: 20px;
    height: 20px;
    margin: 0 auto 4px;
}
.modes .active {
    border-bottom: 4px solid #e3c63a;
    border-radius: 2px;
}
.wells {
    padding: 5px 5px 0 5px;
}
.wells h4 {
    padding-left: 4px;
}
.wells h4:first-child {
    padding: 0 0 4px 7px;
}
.well {
    height: 35px;
    padding: 4px 1px;
    border: 1px dashed #bbb;
    background: #fff;
}
.pill {
    display: flex;
    align-items: center;
    gap: 3px;
    height: 21px;
    padding: 0 2px 0 4px;
    border: 1px solid #bbb;
    border-radius: 2px;
    background: #e8e7e6;
    color: #444;
}
.pill span {
    flex: 1;
}
.pill svg {
    width: 12px;
    height: 12px;
}
.wells h3 {
    padding: 14px 0 12px 9px;
    font-size: 14px;
    font-weight: 600;
    line-height: 20px;
}
.toggle {
    display: flex;
    align-items: center;
    gap: 3px;
    height: 39px;
    padding-left: 13px;
}
.toggle + h4 {
    padding-top: 6px;
}
.toggle + .well {
    margin-top: 1px;
}
.toggle input {
    appearance: none;
    position: relative;
    width: 27px;
    height: 11px;
    margin: 0;
    background: linear-gradient(#555, #555) center / 100% 2px no-repeat;
}
.toggle input::before {
    content: '';
    position: absolute;
    left: 0;
    top: 0;
    width: 11px;
    height: 11px;
    border: 2px solid #555;
    border-radius: 50%;
    background: #fff;
}
.toggle input:checked::before {
    left: auto;
    right: 0;
    background: #555;
}
.well.hint {
    height: 23px;
    padding: 0;
    line-height: 21px;
    text-align: center;
    white-space: nowrap;
}

/* Fields */
.fields {
    grid-row: 1 / 3;
    grid-column: 5;
    display: flex;
    flex-direction: column;
    min-height: 0;
}
.fields .search {
    flex: none;
    margin: 2px 2px 4px 4px;
}
.fields > header {
    flex: none;
}
.tree {
    position: relative;
    flex: 1;
    min-height: 0;
    display: flex;
    flex-direction: column;
    justify-content: flex-end;
    overflow: hidden;
    margin-top: 8px;
}
.items {
    flex: none;
    display: grid;
    grid-auto-rows: 1fr;
    height: 360px;
}
.items.single {
    height: 29px;
}
.items label {
    display: grid;
    grid-template-columns: 12px 12px 12px 1fr;
    column-gap: 6px;
    align-items: center;
    padding-left: 11px;
    white-space: nowrap;
}
.items input {
    appearance: none;
    width: 12px;
    height: 12px;
    margin: 0;
    border: 1px solid #777;
    border-radius: 2px;
}
.items svg {
    width: 10px;
    height: 13px;
}
.items .chev {
    width: 12px;
    height: 12px;
}
.items .date {
    width: 12px;
}
.table-row {
    flex: none;
    display: flex;
    align-items: center;
    height: 26px;
    gap: 7px;
    padding-left: 4px;
}
.table-row svg {
    width: 12px;
    height: 12px;
}
.table-row svg + svg {
    margin-right: 3px;
}
.thumb {
    position: absolute;
    right: 0;
    bottom: 13px;
    width: 4px;
    height: 206px;
    background: #c8c7c5;
}

/* Page tabs */
.sheets {
    grid-area: 2 / 2 / 3 / 4;
    display: flex;
    border-right: 1px solid #dddcda;
}
.sheets .arrow {
    width: 18px;
    padding-left: 5px;
}
.sheets .arrow svg {
    width: 6px;
    height: 8px;
    fill: #bbb;
}
.sheets .sheet {
    width: 71px;
    padding-top: 2px;
    border-left: 1px solid #666;
    border-bottom: 2px solid #f2c811;
    background: #fff;
}
.sheets .add {
    width: 37px;
    margin: 2px 0 1px;
    background: #f2c811;
}
.sheets .add svg {
    width: 12px;
    height: 12px;
    margin: 0 auto;
}
footer {
    flex: none;
    height: 20px;
    padding-left: 5px;
    font-size: 10px;
    line-height: 20px;
}
```
